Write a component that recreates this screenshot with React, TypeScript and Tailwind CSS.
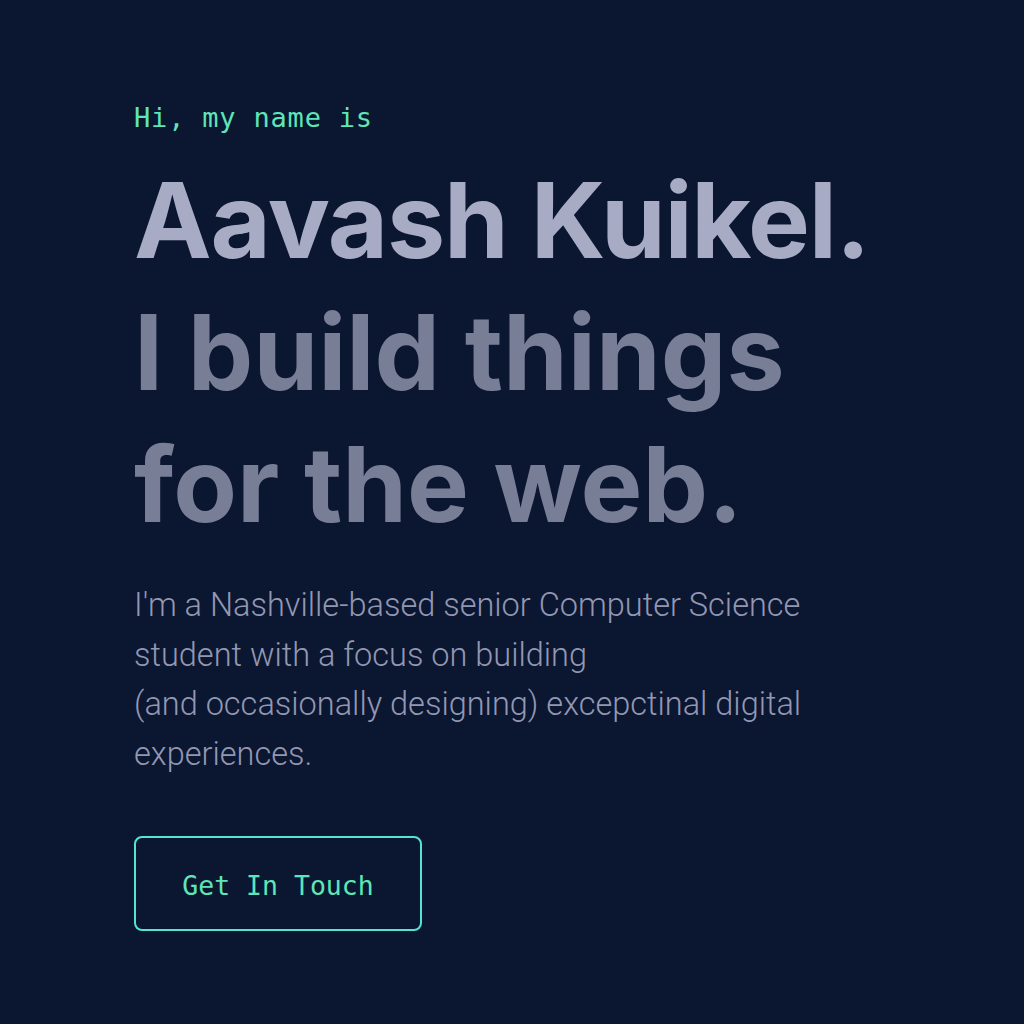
export default function App() {
  return (
    <div className="min-h-[1024px] w-full bg-[#0b1630]">
      <div className="flex flex-col pl-[134px] pt-[100px]">
        <p className="font-['DejaVu_Sans_Mono',monospace] text-[27px] leading-[36px] tracking-[0.03em] text-[#5ee6b9]">
          Hi, my name is
        </p>
        <h1 className="mt-[18px] font-['Inter',sans-serif] text-[104px] font-bold leading-[132px]">
          <span className="block tracking-[-0.012em] text-[#a8abc4]">Aavash Kuikel.</span>
          <span className="block text-[#797e97]">I build things</span>
          <span className="block text-[#797e97]">for the web.</span>
        </h1>
        <p className="mt-[31px] w-[740px] font-['Roboto',sans-serif] text-[32.5px] font-light leading-[49.5px] text-[#9297b2]">
          I'm a Nashville-based senior Computer Science
          <br />
          student with a focus on building
          <br />
          (and occasionally designing) excepctinal digital
          <br />
          experiences.
        </p>
        <div className="mt-[57px]">
          <button className="flex h-[95px] w-[288px] items-center justify-center rounded-lg border-2 border-[#55e4cf] pt-1 font-['DejaVu_Sans_Mono',monospace] text-[26.5px] text-[#5ee6b9]">
            Get In Touch
          </button>
        </div>
      </div>
    </div>
  );
}
